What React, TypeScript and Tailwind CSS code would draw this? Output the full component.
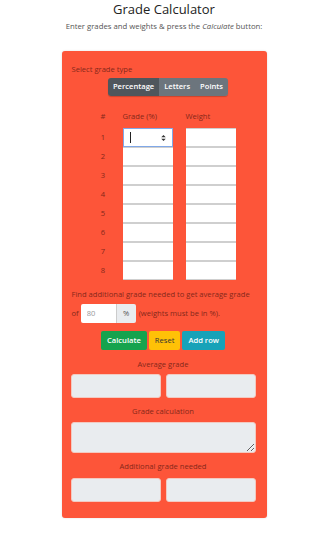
import { useState } from "react";

const rows = [1, 2, 3, 4, 5, 6, 7, 8];

function Spinner() {
  return (
    <svg
      aria-hidden="true"
      viewBox="0 0 6 8"
      className="pointer-events-none absolute right-[7px] top-1/2 h-[6px] w-[5px] -translate-y-1/2 text-[#333]"
    >
      <path d="M3 0 L6 3 L0 3 Z M3 8 L6 5 L0 5 Z" fill="currentColor" />
    </svg>
  );
}

function OutputPair() {
  return (
    <div className="grid grid-cols-2 gap-[5px]">
      <div className="h-[24px] rounded-[3px] border border-[#f3c9c0] bg-[#e9ecef]" />
      <div className="h-[24px] rounded-[3px] border border-[#f3c9c0] bg-[#e9ecef]" />
    </div>
  );
}

export default function App() {
  const [type, setType] = useState("Percentage");

  return (
    <div className="min-h-[553px] bg-white pb-[35px] font-['Open_Sans',sans-serif] text-[#212529]">
      <h1 className="pt-[1px] text-center text-[13px] leading-[16px] text-[#222]">
        Grade Calculator
      </h1>
      <p className="mt-[2px] text-center text-[7.75px] leading-[14px] text-[#555]">
        Enter grades and weights &amp; press the <em>Calculate</em> button:
      </p>

      <div className="mx-auto mt-[18px] w-[205px] rounded-[3px] bg-[#fd5539] pb-[16px] pl-[9px] pr-[11px] pt-[12px] text-[7.6px] text-[#85281a] shadow-[0_0_2px_rgba(0,0,0,0.15)]">
        <p className="pl-[1px] leading-[12px]">Select grade type</p>

        <div className="mt-[3px] flex justify-center pl-[10px]">
          <div className="flex h-[18px] overflow-hidden rounded-[3px] shadow-[0_1px_1px_rgba(0,0,0,0.2)]">
            {["Percentage", "Letters", "Points"].map((t) => (
              <button
                key={t}
                onClick={() => setType(t)}
                className={
                  "px-[5px] text-[7.6px] font-semibold text-white " +
                  (type === t ? "bg-[#4f565c]" : "bg-[#6c757d]")
                }
              >
                {t}
              </button>
            ))}
          </div>
        </div>

        <div className="mt-[14px] pl-[24px]">
          <div className="flex h-[12px] items-center leading-[12px]">
            <span className="w-[17px] text-center">#</span>
            <span className="ml-[11px] w-[50px]">Grade (%)</span>
            <span className="ml-[13px] w-[50px]">Weight</span>
          </div>

          <div className="mt-[6px] flex flex-col">
            {rows.map((n) => (
              <div key={n} className="flex h-[19px] items-center">
                <span className="w-[17px] text-center">{n}</span>
                <div className="relative ml-[11px] h-[19px] w-[50px]">
                  <input
                    aria-label={"Grade " + n}
                    className={
                      "h-full w-full bg-white px-[6px] text-[7px] text-[#333] outline-none " +
                      (n === 1
                        ? "border border-[#80a8e8] caret-[#222]"
                        : "border-y border-y-[#cfcfcf] border-x-0")
                    }
                  />
                  {n === 1 && (
                    <>
                      <span className="pointer-events-none absolute left-[7px] top-[4px] h-[11px] w-px bg-[#222]" />
                      <Spinner />
                    </>
                  )}
                </div>
                <input
                  aria-label={"Weight " + n}
                  className="ml-[13px] h-[19px] w-[50px] border-y border-y-[#cfcfcf] border-x-0 bg-white px-[6px] text-[7px] outline-none"
                />
              </div>
            ))}
          </div>
        </div>

        <p className="mt-[8px] pl-[1px] leading-[12px]">
          Find additional grade needed to get average grade
        </p>

        <div className="mt-[4px] flex h-[19px] items-center pl-[1px]">
          <span>of</span>
          <div className="ml-[2px] flex h-[19px] overflow-hidden rounded-[2px]">
            <input
              aria-label="Target"
              placeholder="80"
              className="w-[35px] bg-white px-[6px] text-[7.6px] text-[#333] outline-none placeholder:text-[#999]"
            />
            <span className="flex w-[20px] items-center justify-center border-l border-[#ccc] bg-[#e9ecef] text-[#555]">
              %
            </span>
          </div>
          <span className="ml-[3px]">(weights must be in %).</span>
        </div>

        <div className="mt-[8px] flex justify-center gap-[2px]">
          <button className="h-[19px] rounded-[2px] bg-[#16a34e] px-[6px] text-[7.6px] font-semibold text-white">
            Calculate
          </button>
          <button className="h-[19px] rounded-[2px] bg-[#ffc107] px-[6px] text-[7.6px] text-[#333]">
            Reset
          </button>
          <button className="h-[19px] rounded-[2px] bg-[#17a2b8] px-[6px] text-[7.6px] font-semibold text-white">
            Add row
          </button>
        </div>

        <p className="mt-[8px] text-center leading-[12px]">Average grade</p>
        <div className="mt-[4px]">
          <OutputPair />
        </div>

        <p className="mt-[7px] text-center leading-[12px]">Grade calculation</p>
        <textarea
          aria-label="Grade calculation"
          readOnly
          className="mt-[5px] block h-[31px] w-full rounded-[3px] border border-[#f3c9c0] bg-[#e9ecef] outline-none"
        />

        <p className="mt-[7px] text-center leading-[12px]">Additional grade needed</p>
        <div className="mt-[6px]">
          <OutputPair />
        </div>
      </div>
    </div>
  );
}
